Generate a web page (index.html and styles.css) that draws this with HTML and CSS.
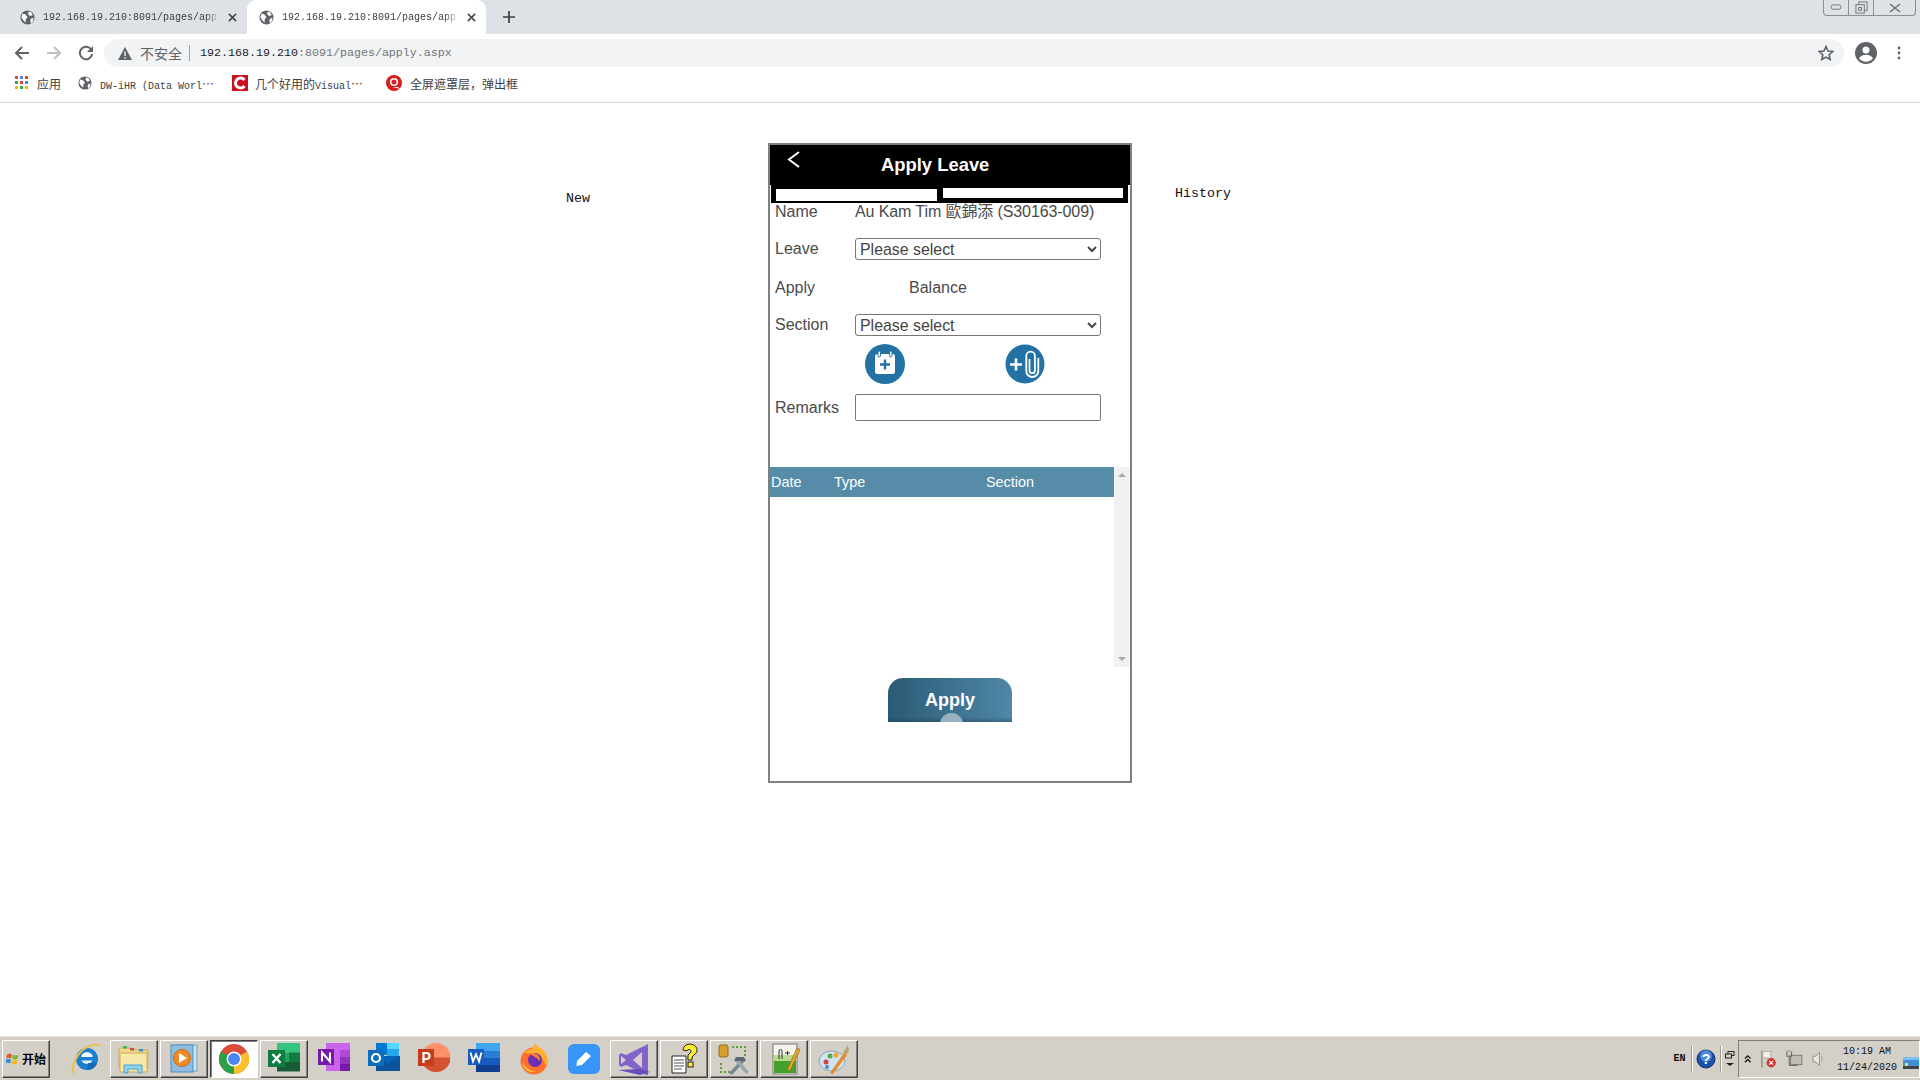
FILE: index.html
```html
<!DOCTYPE html>
<html lang="zh">
<head>
<meta charset="utf-8">
<title>Apply Leave</title>
<link rel="stylesheet" href="styles.css">
</head>
<body>
<header class="browser">
  <div class="tabstrip">
    <div class="tab">
      <svg class="globe" viewBox="0 0 16 16"><circle cx="8" cy="8" r="7.500" fill="#5f6368"/><path d="M2.500 4l3 .5 2.500 3-2 2.500v3.500L3.500 11 1.500 8zM9.500 1.500l3 1.500 1 2.500-3 1-2-2.500zM12 9l2.500-.5-1 4-2 1.500-.5-3z" fill="#fff"/></svg>
      <span class="tabtitle">192.168.19.210:8091/pages/apply.aspx</span>
      <svg class="tabx" viewBox="0 0 10 10"><path d="M1 1l8 8M9 1l-8 8" stroke="#45494e" stroke-width="1.8"/></svg>
    </div>
    <div class="tab active">
      <svg class="globe" viewBox="0 0 16 16"><circle cx="8" cy="8" r="7.500" fill="#5f6368"/><path d="M2.500 4l3 .5 2.500 3-2 2.500v3.500L3.500 11 1.500 8zM9.500 1.500l3 1.500 1 2.500-3 1-2-2.500zM12 9l2.500-.5-1 4-2 1.500-.5-3z" fill="#fff"/></svg>
      <span class="tabtitle">192.168.19.210:8091/pages/apply.aspx</span>
      <svg class="tabx" viewBox="0 0 10 10"><path d="M1 1l8 8M9 1l-8 8" stroke="#45494e" stroke-width="1.8"/></svg>
    </div>
    <svg class="newtab" viewBox="0 0 12 12"><path d="M6 0v12M0 6h12" stroke="#3c4043" stroke-width="1.7"/></svg>
    <div class="wincontrols">
      <span class="wc wc-min"><svg viewBox="0 0 14 8" width="13" height="7"><rect x="1" y="1" width="11" height="5" rx="2" fill="none" stroke="#6d7074"/></svg></span>
      <span class="wc wc-max"><svg viewBox="0 0 14 14" width="13" height="13"><rect x="4" y="1" width="9" height="9" fill="none" stroke="#6d7074"/><rect x="1" y="4" width="9" height="9" fill="#dee1e6" stroke="#6d7074"/><rect x="4" y="7" width="3" height="3" fill="none" stroke="#6d7074"/></svg></span>
      <span class="wc wc-close"><svg viewBox="0 0 12 10" width="12" height="10"><path d="M1 1l10 8M11 1l-10 8" stroke="#6d7074" stroke-width="1.5"/></svg></span>
    </div>
  </div>
  <div class="toolbar">
    <svg class="navicon" viewBox="0 0 16 16"><path d="M15 8H2M8 2L2 8l6 6" fill="none" stroke="#5f6368" stroke-width="2"/></svg>
    <svg class="navicon" viewBox="0 0 16 16"><path d="M1 8h13M8 2l6 6-6 6" fill="none" stroke="#bdc1c6" stroke-width="2"/></svg>
    <svg class="navicon" viewBox="0 0 16 16"><path d="M13.500 5A6.200 6.200 0 1 0 14.200 9" fill="none" stroke="#5f6368" stroke-width="2"/><path d="M15 1v6H9z" fill="#5f6368"/></svg>
    <div class="omnibox">
      <svg class="warn" viewBox="0 0 14 13"><path d="M7 0l7 13H0z" fill="#5f6368"/><path d="M6.300 4.500h1.400v4.500H6.300zM6.300 10h1.400v1.500H6.300z" fill="#f1f3f4"/></svg>
      <span class="insecure">不安全</span>
      <span class="omnisep"></span>
      <span class="url"><span class="urlhost">192.168.19.210</span>:8091/pages/apply.aspx</span>
      <svg class="star" viewBox="0 0 16 16"><path d="M8 1.500l2 4.500 4.800.5-3.600 3.200 1 4.800L8 12.100 3.800 14.500l1-4.800L1.200 6.500 6 6z" fill="none" stroke="#5f6368" stroke-width="1.600"/></svg>
    </div>
    <svg class="avatar" viewBox="0 0 22 22"><circle cx="11" cy="11" r="11" fill="#5f6368"/><circle cx="11" cy="8" r="3.500" fill="#fff"/><path d="M4 16.500c1.500-3 4.500-3.800 7-3.800s5.500.8 7 3.800c-1.600 2-4.200 3.200-7 3.200s-5.400-1.200-7-3.200z" fill="#fff"/></svg>
    <svg class="kebab" viewBox="0 0 4 14"><circle cx="2" cy="2" r="1.400" fill="#5f6368"/><circle cx="2" cy="7" r="1.400" fill="#5f6368"/><circle cx="2" cy="12" r="1.400" fill="#5f6368"/></svg>
  </div>
  <div class="bookmarks">
    <div class="bm bm-apps">
      <svg class="bmicon" viewBox="0 0 14 14"><g><rect width="3" height="3" fill="#ea4335"/><rect x="5" width="3" height="3" fill="#4285f4"/><rect x="10" width="3" height="3" fill="#ea4335"/><rect y="5" width="3" height="3" fill="#34a853"/><rect x="5" y="5" width="3" height="3" fill="#ea4335"/><rect x="10" y="5" width="3" height="3" fill="#4285f4"/><rect y="10" width="3" height="3" fill="#fbbc05"/><rect x="5" y="10" width="3" height="3" fill="#34a853"/><rect x="10" y="10" width="3" height="3" fill="#fbbc05"/></g></svg>
      <span class="cjk">应用</span>
    </div>
    <div class="bm bm-dw">
      <svg class="bmicon" viewBox="0 0 16 16"><circle cx="8" cy="8" r="7.500" fill="#5f6368"/><path d="M2.500 4l3 .5 2.500 3-2 2.500v3.500L3.500 11 1.500 8zM9.500 1.500l3 1.500 1 2.500-3 1-2-2.500zM12 9l2.500-.5-1 4-2 1.500-.5-3z" fill="#fff"/></svg>
      <span class="cjk"><span class="mono">DW-iHR (Data Worl</span>…</span>
    </div>
    <div class="bm bm-vs">
      <svg class="bmicon bmicon-lg" viewBox="0 0 16 16"><rect width="16" height="16" fill="#c9101d"/><path d="M12.500 5A5 5 0 1 0 12.500 11" fill="none" stroke="#fff" stroke-width="3"/></svg>
      <span class="cjk">几个好用的<span class="mono">Visual</span>…</span>
    </div>
    <div class="bm bm-full">
      <svg class="bmicon bmicon-lg" viewBox="0 0 16 16"><circle cx="8" cy="8" r="8" fill="#d81e1e"/><circle cx="8" cy="7" r="4" fill="#fff"/><circle cx="8" cy="7" r="2.500" fill="#d81e1e"/><path d="M7 12h5l2 2z" fill="#fff"/></svg>
      <span class="cjk">全屏遮罩层，弹出框</span>
    </div>
  </div>
</header>

<main class="page">
  <div class="side side-left"><a class="sidelabel">New</a></div>
  <section class="phone">
    <div class="titlebar">
      <svg class="back" viewBox="0 0 13 17"><path d="M12 1L2 8.500 12 16" fill="none" stroke="#fff" stroke-width="2"/></svg>
      <h1 class="apptitle">Apply Leave</h1>
    </div>
    <div class="tabsbar">
      <span class="tabfield tabfield-a"></span>
      <span class="tabfield tabfield-b"></span>
    </div>
    <form class="form">
      <div class="row row-name"><span class="lbl">Name</span><span class="val">Au Kam Tim 歐錦添 (S30163-009)</span></div>
      <div class="row row-leave"><label class="lbl">Leave</label><select class="sel"><option>Please select</option></select></div>
      <div class="row row-apply"><span class="lbl">Apply</span><span class="balance">Balance</span></div>
      <div class="row row-section"><label class="lbl">Section</label><select class="sel"><option>Please select</option></select></div>
      <div class="row-icons">
        <svg class="circ" viewBox="0 0 40 40"><circle cx="20" cy="20" r="20" fill="#2472a4"/><rect x="10" y="10" width="20" height="20" rx="2.500" fill="#fff"/><rect x="13" y="7" width="2.500" height="6" rx="1.200" fill="#fff" stroke="#2472a4"/><rect x="24.500" y="7" width="2.500" height="6" rx="1.200" fill="#fff" stroke="#2472a4"/><path d="M20 15.500v10M15 20.500h10" stroke="#2472a4" stroke-width="2.400"/></svg>
        <svg class="circ circ-b" viewBox="0 0 40 40"><circle cx="20" cy="20" r="19.500" fill="#2472a4"/><path d="M5 20.500h12M11 14.500v12" stroke="#fff" stroke-width="2.600"/><path d="M24.500 15v11.500a2.700 2.700 0 0 0 5.400 0V12a4.300 4.300 0 0 0-8.600 0v15a6 6 0 0 0 12 0V14" fill="none" stroke="#fff" stroke-width="1.800"/></svg>
      </div>
      <div class="row row-remarks"><label class="lbl">Remarks</label><input class="txt" type="text"></div>
    </form>
    <div class="gridwrap">
      <div class="grid">
        <div class="gridhead"><span class="col-date">Date</span><span class="col-type">Type</span><span class="col-section">Section</span></div>
      </div>
      <div class="scroll"><span class="arrow-up"></span><span class="arrow-down"></span></div>
    </div>
    <div class="applywrap">
      <button class="applybtn" type="button"><span class="applytext">Apply</span><span class="nub"></span></button>
    </div>
  </section>
  <div class="side side-right"><a class="sidelabel">History</a></div>
</main>

<footer class="taskbar">
  <div class="tb start">
    <svg class="flag" viewBox="0 0 14 14"><path d="M1 2.500c2-1 3.500-.8 5 0l-.8 4c-1.500-.8-3-1-5 0z" fill="#e8562a"/><path d="M7 2.800c1.800 1 3.500 1 5.500 0l-.8 4c-1.800 1-3.500 1-5.500 0z" fill="#7cb82f"/><path d="M0 7.500c2-1 3.500-.8 5 0l-.8 4c-1.500-.8-3-1-5 0z" fill="#2d8fd8"/><path d="M6 7.800c1.800 1 3.500 1 5.500 0l-.8 4c-1.800 1-3.500 1-5.500 0z" fill="#f5b91f"/></svg>
    <span class="starttext">开始</span>
  </div>
  <div class="ti">
    <svg viewBox="0 0 32 32" width="32" height="32"><circle cx="17" cy="16" r="11" fill="#1a7fd0"/><circle cx="17" cy="15" r="6" fill="#dff1fb"/><rect x="6" y="14" width="22" height="3.500" fill="#1a7fd0"/><rect x="12" y="11" width="10" height="3" fill="#fff"/><path d="M18 20h9c-1 4-5 7-10 7z" fill="#1568b4"/><path d="M4 30C0 26 6 12 14 6c6-4 14-6 16-3" fill="none" stroke="#e8c24a" stroke-width="2"/></svg>
  </div>
  <div class="tb">
    <svg viewBox="0 0 32 32" width="32" height="32"><path d="M1 5h11l2 2h16v18H1z" fill="#f0d98c" stroke="#c9ab5c"/><rect x="5" y="3" width="4" height="2.500" fill="#3fb54a"/><rect x="12" y="5" width="4" height="2.500" fill="#d94a3a"/><rect x="21" y="6" width="4" height="2.500" fill="#3a90d9"/><rect x="2" y="10" width="27" height="19" fill="#f7e7a9" stroke="#c9ab5c"/><path d="M6 30V22h18v8h-4v-4H10v4z" fill="#8fd1ef" stroke="#4f9fc9"/></svg>
  </div>
  <div class="tb">
    <svg viewBox="0 0 32 32" width="32" height="32"><rect x="7" y="2" width="22" height="26" fill="#cfe2f1" stroke="#6ea3c8"/><rect x="3" y="2" width="22" height="27" fill="#8dbde0" stroke="#4f8fbf"/><circle cx="14" cy="15" r="8.500" fill="#f08a24" stroke="#d06a10"/><path d="M11 10l8 5-8 5z" fill="#fff"/></svg>
  </div>
  <div class="tb pressed">
    <svg viewBox="0 0 32 32" width="32" height="32"><circle cx="16" cy="16" r="15" fill="#dd4b39"/><path d="M16 16L29 8.500A15 15 0 0 1 16 31z" fill="#fbc02d"/><path d="M16 16L16 31A15 15 0 0 1 3 8.500z" fill="#2e9f49"/><circle cx="16" cy="16" r="7.500" fill="#fff"/><circle cx="16" cy="16" r="6" fill="#4b87f0"/></svg>
  </div>
  <div class="tb">
    <svg viewBox="0 0 32 32" width="32" height="32"><rect x="9" y="0" width="23" height="9.500" fill="#33c481"/><rect x="9" y="9.500" width="23" height="9.500" fill="#21a366"/><rect x="9" y="19" width="23" height="9.500" fill="#185c37"/><rect x="21" y="0" width="11" height="9.500" fill="#33c481"/><rect x="21" y="9.500" width="11" height="9.500" fill="#107c41"/><rect x="0" y="7" width="17" height="17" fill="#107c41"/><path d="M4.500 11l8 9M12.500 11l-8 9" stroke="#fff" stroke-width="2.400"/></svg>
  </div>
  <div class="ti">
    <svg viewBox="0 0 32 32" width="32" height="32"><rect x="8" y="0" width="24" height="28" fill="#ca64ea"/><rect x="22" y="7" width="10" height="7" fill="#ae4bd5"/><rect x="22" y="14" width="10" height="7" fill="#9332bf"/><rect x="22" y="21" width="10" height="7" fill="#7719aa"/><rect x="0" y="6" width="16" height="16" fill="#7719aa"/><path d="M4 18.500v-9l8 9v-9" fill="none" stroke="#fff" stroke-width="2"/></svg>
  </div>
  <div class="ti">
    <svg viewBox="0 0 32 32" width="32" height="32"><rect x="8" y="0" width="22" height="12" fill="#0078d4"/><rect x="19" y="0" width="12" height="6" fill="#50d9ff"/><rect x="19" y="6" width="12" height="7" fill="#28a8ea"/><path d="M8 13h24v15H8z" fill="#0364b8"/><path d="M8 13l12 8 12-8v15H8z" fill="#14447d" opacity=".5"/><rect x="0" y="7" width="16" height="16" fill="#0f6cbd"/><circle cx="8" cy="15" r="4" fill="none" stroke="#fff" stroke-width="2.200"/></svg>
  </div>
  <div class="ti">
    <svg viewBox="0 0 32 32" width="32" height="32"><circle cx="18" cy="14.500" r="14.500" fill="#ff8f6b"/><path d="M18 14.500H32.500A14.500 14.500 0 0 1 3.500 14.500z" fill="#d35230"/><rect x="0" y="6" width="16" height="17" fill="#c43e1c"/><path d="M5.500 20V10h3a3 3 0 0 1 0 6h-3" fill="none" stroke="#fff" stroke-width="2.200"/></svg>
  </div>
  <div class="ti">
    <svg viewBox="0 0 32 32" width="32" height="32"><rect x="8" y="0" width="24" height="8" fill="#41a5ee"/><rect x="8" y="8" width="24" height="7" fill="#2b7cd3"/><rect x="8" y="15" width="24" height="7" fill="#185abd"/><rect x="8" y="22" width="24" height="7" fill="#103f91"/><rect x="0" y="6" width="16" height="16" fill="#185abd"/><path d="M2.500 9.500l2.500 9 3-7 3 7 2.500-9" fill="none" stroke="#fff" stroke-width="1.900"/></svg>
  </div>
  <div class="ti">
    <svg viewBox="0 0 32 32" width="32" height="32"><circle cx="16" cy="18" r="13.500" fill="#ff6f2e"/><path d="M6 10C9 6 14 8 15 4c1-2 3-4 3-4 0 4 4 4 7 7 5 5 5 12 3 16-3-9-9-13-22-13z" fill="#ffb02e"/><circle cx="17" cy="17" r="7" fill="#6a2fb5"/><path d="M11 11c5-3 12 1 11 7-3-3-6-5-11-7z" fill="#ff7b26"/><path d="M4 20c2 7 8 10 14 9-6-1-10-4-14-9z" fill="#ffd53e"/></svg>
  </div>
  <div class="ti">
    <svg viewBox="0 0 32 32" width="32" height="32"><rect width="32" height="30" rx="6" y="1" fill="#3796f8"/><path d="M9 18L18 9l5 4-9 9-5.500 1z" fill="#fff"/></svg>
  </div>
  <div class="tb">
    <svg viewBox="0 0 32 32" width="32" height="32"><path d="M30 1L18 7 8 12l-5-2-2 2v10l2 2 5-2 10 5 12 6z" fill="#8263c9"/><path d="M24 9v16l-9-8z M3 13l5 4-5 4z" fill="#d6d0c8"/><path d="M0 27L22 32 32 29 22 26z" fill="#6a4bb8"/></svg>
  </div>
  <div class="tb">
    <svg viewBox="0 0 32 32" width="32" height="32"><path d="M4 13h14v17H4z" fill="#fff" stroke="#222"/><path d="M6 17h10M6 20h10M6 23h10M6 26h8" stroke="#555"/><path d="M15 7a7 6 0 1 1 11 5l-2 2v3h-4v-5l3-3a2 2 0 1 0-4-1z" fill="#ffef2e" stroke="#222"/><rect x="20" y="19" width="5" height="5" fill="#ffef2e" stroke="#222"/></svg>
  </div>
  <div class="tb">
    <svg viewBox="0 0 32 32" width="32" height="32"><rect x="1" y="2" width="9" height="12" rx="2" fill="#d4a12c" stroke="#8f6a1a"/><path d="M14 4h13v10M3 20v9h10" fill="none" stroke="#5a9d3b" stroke-width="2" stroke-dasharray="2 2"/><path d="M11 30l13-14 3 2-13 14z" fill="#7a8791"/><path d="M20 16l11 13-3 2-11-13z" fill="#9aa6b0"/><path d="M18 14h8l2 4h-12z" fill="#5d6872"/></svg>
  </div>
  <div class="tb">
    <svg viewBox="0 0 32 32" width="32" height="32"><rect x="5" y="1" width="24" height="30" fill="#f4f4ec" stroke="#777"/><rect x="6" y="17" width="22" height="13" fill="#43a02a"/><rect x="6" y="12" width="22" height="6" fill="#b7dc8e"/><path d="M11 16V8a1.500 1.500 0 0 1 3 0v8" fill="none" stroke="#333"/><path d="M17 10h5M19.500 8v4" stroke="#333"/><path d="M19 27L29 5l3 1.500L22 28z" fill="#e7a72b" stroke="#7d5a12" stroke-width=".6"/></svg>
  </div>
  <div class="tb">
    <svg viewBox="0 0 32 32" width="32" height="32"><ellipse cx="14" cy="18" rx="13" ry="10" fill="#cfe3f2" stroke="#8aa5bb"/><circle cx="8" cy="19" r="2.500" fill="#d5443c"/><circle cx="12" cy="13" r="2.500" fill="#58a94a"/><circle cx="18" cy="12" r="2.500" fill="#f0a52a"/><circle cx="9" cy="24" r="2" fill="#4a86d0"/><path d="M12 30L26 10l3 2L15 31z" fill="#e88a2a"/><path d="M25 10l5-8 1 6-3 4z" fill="#c0a070"/></svg>
  </div>
  <div class="tray">
    <span class="lang">EN</span>
    <span class="traysep"></span>
    <svg class="helpicon" viewBox="0 0 20 20"><circle cx="10" cy="10" r="9" fill="#1b4fa8" stroke="#0c2f70"/><circle cx="10" cy="7" r="6" fill="#4f86dc"/><text x="10" y="15" class="helpq">?</text></svg>
    <span class="traysep"></span>
    <div class="langbar">
      <svg viewBox="0 0 10 8" width="10" height="8"><rect x="3" y=".5" width="6" height="4" fill="none" stroke="#222"/><rect x=".5" y="3" width="6" height="4" fill="#d4d0c8" stroke="#222"/></svg>
      <span class="downtri"></span>
    </div>
    <div class="traybox">
      <svg class="chev" viewBox="0 0 8 10" width="8" height="10"><path d="M1 4.500l3-3 3 3M1 8.500l3-3 3 3" fill="none" stroke="#111" stroke-width="1.300"/></svg>
      <svg class="flagicon" viewBox="0 0 18 20" width="18" height="20"><path d="M2 1v18" stroke="#8f8f8f" stroke-width="1.600"/><path d="M3 2h10l-2 3 2 4H3z" fill="#f0efe9" stroke="#a8a8a8"/><circle cx="12" cy="14" r="5" fill="#d8342b"/><path d="M10 12l4 4M14 12l-4 4" stroke="#fff" stroke-width="1.300"/></svg>
      <svg viewBox="0 0 18 18" width="18" height="18"><rect x="5" y="5" width="12" height="10" fill="#bfbdb5" stroke="#777"/><path d="M1 1v5h5V1M2.500 1v-1M4.500 1v-1M3.500 6v10h9" fill="none" stroke="#6d6d6d" stroke-width="1.200"/></svg>
      <svg viewBox="0 0 14 16" width="14" height="16"><path d="M1 5h3l4-4v14l-4-4H1z" fill="#e9e7df" stroke="#8f8f8f"/><path d="M10 5c1 2 1 4 0 6" fill="none" stroke="#a0a0a0"/></svg>
      <div class="clock"><span>10:19 AM</span><span>11/24/2020</span></div>
      <svg class="desk" viewBox="0 0 16 14" width="16" height="14"><rect width="16" height="11" y="1" fill="#3d8fd6"/><rect y="1" width="16" height="3" fill="#7cc0ee"/><rect y="10" width="16" height="3" fill="#444"/><rect x="2" y="7" width="3" height="3" fill="#f5d76e"/></svg>
    </div>
  </div>
</footer>
</body>
</html>
```

FILE: styles.css
```css
* { box-sizing: border-box; }
html, body { margin: 0; padding: 0; }
body {
  width: 1920px;
  height: 1080px;
  display: flex;
  flex-direction: column;
  background: #fff;
  font-family: "Liberation Sans", "Noto Sans CJK TC", sans-serif;
  overflow: hidden;
}

/* browser chrome */
.browser { flex: none; height: 103px; border-bottom: 1px solid #d6d6d6; background: #fff; }
.tabstrip { height: 34px; background: #dee1e6; display: flex; align-items: flex-start; padding-left: 8px; }
.tab { width: 239px; height: 34px; display: flex; align-items: center; padding: 0 10px 0 12px; gap: 8px; border-radius: 9px 9px 0 0; }
.tab.active { background: #fff; }
.globe { width: 15px; height: 15px; flex: none; }
.tabtitle {
  flex: 1; min-width: 0; overflow: hidden; white-space: nowrap;
  font: 10px "Liberation Mono", monospace; color: #3c4043;
  -webkit-mask-image: linear-gradient(90deg, #000 92%, transparent);
  mask-image: linear-gradient(90deg, #000 92%, transparent);
}
.tabx { width: 9px; height: 9px; flex: none; }
.newtab { width: 12px; height: 12px; margin: 11px 0 0 17px; flex: none; }
.wincontrols {
  margin-left: auto; margin-right: 4px; display: flex; height: 16px; width: 93px;
  border: 1px solid #8b8e92; border-top: 0; border-radius: 0 0 4px 4px;
}
.wc { display: flex; align-items: center; justify-content: center; height: 15px; }
.wc-min { width: 25px; border-right: 1px solid #8b8e92; }
.wc-max { width: 25px; border-right: 1px solid #8b8e92; }
.wc-close { flex: 1; }

.toolbar { height: 36px; display: flex; align-items: center; padding: 2px 0 0 14px; }
.navicon { width: 16px; height: 16px; flex: none; margin-right: 16px; }
.omnibox {
  width: 1740px; height: 28px; margin-left: -6px; background: #f1f3f4; border-radius: 14px;
  display: flex; align-items: center; padding: 0 10px 0 14px; flex: none;
}
.warn { width: 14px; height: 13px; flex: none; }
.insecure { font: 14px "Noto Sans CJK SC", sans-serif; color: #5f6368; margin-left: 8px; }
.omnisep { width: 1px; height: 16px; background: #9aa0a6; margin: 0 9px 0 7px; }
.url { font: 11.67px "Liberation Mono", monospace; color: #70757a; margin-left: 1px; }
.urlhost { color: #202124; }
.star { width: 16px; height: 16px; margin-left: auto; flex: none; }
.avatar { width: 22px; height: 22px; margin-left: 11px; flex: none; }
.kebab { width: 4px; height: 14px; margin-left: 20px; flex: none; }

.bookmarks { height: 32px; display: flex; align-items: center; padding: 0 0 6px 15px; }
.bm { display: flex; align-items: center; gap: 8px; color: #3c4043; }
.bmicon { width: 14px; height: 14px; flex: none; }
.bmicon-lg { width: 16px; height: 16px; }
.bm-apps { width: 63px; }
.bm-dw { width: 154px; gap: 8px; }
.bm-vs { width: 154px; gap: 7px; }
.cjk { font: 12px "Noto Sans CJK SC", sans-serif; white-space: nowrap; }
.mono { font: 10px "Liberation Mono", monospace; }

/* page */
.page { flex: 1; min-height: 0; display: grid; grid-template-columns: 768px 364px 1fr; align-items: start; padding-top: 40px; }
.side { font: 13.33px "Liberation Mono", monospace; color: #111; }
.side-left { padding: 48px 0 0 566px; }
.side-right { padding: 43px 0 0 43px; }
.sidelabel { display: block; }

.phone { height: 640px; border: 2px solid #808080; background: #fff; display: flex; flex-direction: column; position: relative; }
.titlebar { flex: none; height: 40px; background: #000; display: flex; align-items: center; position: relative; }
.back { width: 13px; height: 17px; flex: none; margin: -12px 0 0 17px; }
.apptitle { margin: 0 0 0 81px; font: bold 18.4px "Liberation Sans", sans-serif; color: #fff; }
.tabsbar { flex: none; height: 18px; margin: 0 2px 0 1px; background: #000; display: flex; gap: 6px; padding: 3px 5px 0; align-items: flex-start; }
.tabfield { display: block; background: #fff; height: 12px; }
.tabfield-a { width: 161px; margin-top: 1px; }
.tabfield-b { width: 180px; height: 10px; }

.form { flex: none; padding-left: 5px; font-size: 16px; color: #4a4a4a; }
.row { display: flex; align-items: center; }
.lbl { width: 80px; flex: none; }
.row-name { height: 18px; line-height: 18px; }
.row-name .val { letter-spacing: -.1px; }
.row-leave { margin-top: 17px; height: 22px; }
.row-apply { margin-top: 17px; height: 21px; }
.balance { margin-left: 54px; }
.row-section { margin-top: 16px; height: 22px; }
.sel {
  width: 246px; height: 22px; padding: 0; font: 15.9px "Liberation Sans", sans-serif; color: #444;
  background: #fff; border: 1px solid #767676; border-radius: 3px;
}
.row-icons { height: 40px; margin-top: 8px; display: flex; gap: 100px; padding-left: 90px; align-items: center; }
.circ { width: 40px; height: 40px; flex: none; }
.row-remarks { margin-top: 10px; height: 27px; }
.txt { width: 246px; height: 27px; border: 1px solid #767676; border-radius: 2px; background: #fff; padding: 0; }

.gridwrap { flex: none; height: 200px; margin-top: 46px; display: flex; margin-right: 0; }
.grid { width: 344px; flex: none; }
.gridhead { height: 30px; background: #568ca8; color: #fff; font-size: 14.4px; display: grid; grid-template-columns: 63px 152px 1fr; align-items: center; padding-left: 1px; }
.scroll { flex: 1; background: #f1f1f1; display: flex; flex-direction: column; justify-content: space-between; align-items: center; padding: 6px 0; }
.arrow-up, .arrow-down { width: 0; height: 0; border-left: 4px solid transparent; border-right: 4px solid transparent; }
.arrow-up { border-bottom: 4px solid #a8a8a8; }
.arrow-down { border-top: 4px solid #a8a8a8; }

.applywrap { flex: none; margin-top: 11px; display: flex; padding-left: 118px; }
.applybtn {
  width: 124px; height: 44px; border: 0; padding: 0; border-radius: 15px 15px 0 0; position: relative; overflow: hidden;
  background: linear-gradient(180deg, transparent 88%, rgba(20,50,70,.35)), linear-gradient(90deg, #2a5b76, #4f87a7);
  color: #fff; font: bold 18px "Liberation Sans", sans-serif; display: block;
}
.applytext { display: block; margin-top: 1px; }
.nub { position: absolute; left: 52px; top: 35px; width: 23px; height: 23px; border-radius: 50%; background: #98b2c2; }

/* taskbar */
.taskbar {
  flex: none; height: 44px; background: #d4d0c8; border-top: 1px solid #e9e6df;
  display: flex; align-items: center; padding: 0 0 0 2px; position: relative;
}
.tb, .ti { width: 48px; height: 38px; margin-right: 2px; flex: none; display: flex; align-items: center; justify-content: center; }
.tb { background: #d4d0c8; border: 1px solid; border-color: #fff #404040 #404040 #fff; box-shadow: inset -1px -1px 0 #808080; }
.tb.pressed { background: #fff; border-color: #404040 #fff #fff #404040; box-shadow: inset 1px 1px 0 #808080; }
.start { gap: 2px; margin-right: 13px; }
.flag { width: 14px; height: 14px; }
.starttext { font: bold 12px "Noto Sans CJK SC", sans-serif; color: #000; }
.ti:nth-child(2) { width: 45px; }
.tray { margin-left: auto; display: flex; align-items: center; height: 38px; }
.lang { font: bold 10px "Liberation Mono", monospace; color: #111; width: 35px; text-align: center; padding-left: 12px; }
.traysep { width: 1px; height: 26px; background: #9f9c95; box-shadow: 1px 0 0 #fff; }
.helpicon { width: 20px; height: 20px; margin: 0 4px 0 4px; }
.helpq { font: bold 14px "Liberation Sans", sans-serif; fill: #fff; text-anchor: middle; }
.langbar { width: 17px; display: flex; flex-direction: column; align-items: center; gap: 4px; }
.downtri { width: 0; height: 0; border-left: 4px solid transparent; border-right: 4px solid transparent; border-top: 3px solid #222; }
.traybox { width: 182px; height: 38px; border: 1px solid; border-color: #808080 #fff #fff #808080; display: flex; align-items: center; gap: 9px; padding-left: 5px; }
.clock { display: flex; flex-direction: column; align-items: center; width: 60px; margin: 2px 0 0 3px; font: 10px/16px "Liberation Mono", monospace; color: #111; white-space: nowrap; }
.desk { margin: 8px 0 0 -3px; flex: none; }
```
